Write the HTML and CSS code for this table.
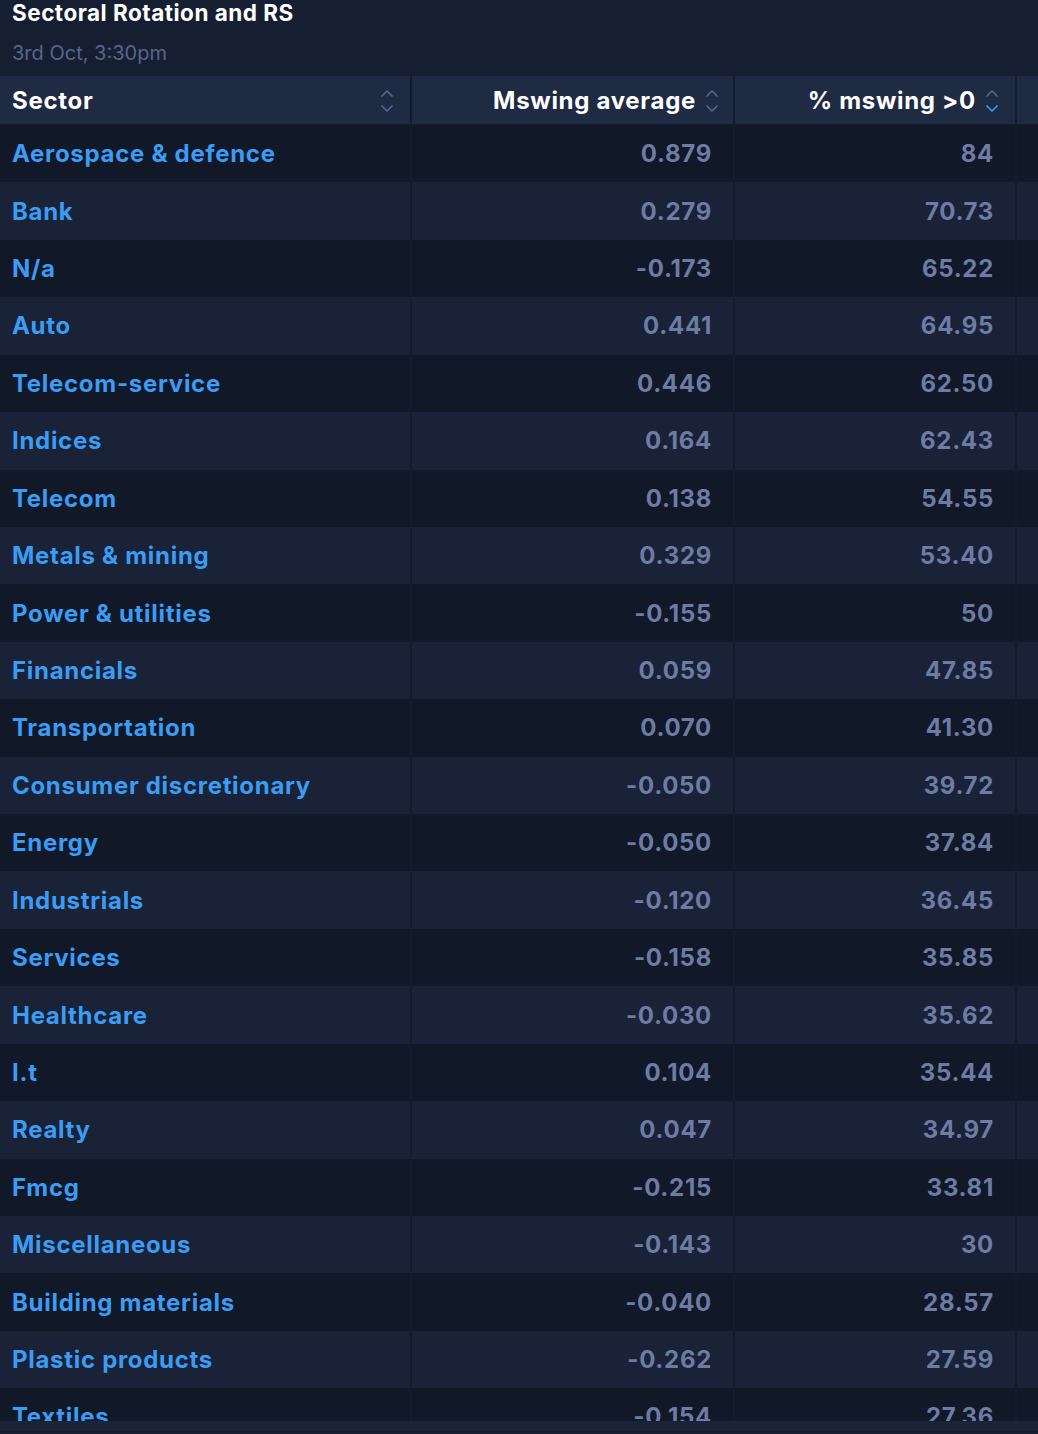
FILE: index.html
```html
<!DOCTYPE html>
<html>
<head>
<meta charset="utf-8">
<link rel="stylesheet" href="styles.css">
</head>
<body>
<div class="page">
  <div class="heading">
    <div class="title">Sectoral Rotation and RS</div>
    <div class="subtitle">3rd Oct, 3:30pm</div>
  </div>
  <div class="table">
    <div class="row head">
      <div class="cell c1"><span>Sector</span>
        <svg class="sort" viewBox="0 0 14 26"><path d="M2 8 L7 3 L12 8" class="up"/><path d="M2 18 L7 23 L12 18" class="down"/></svg>
      </div>
      <div class="cell c2"><span>Mswing average</span>
        <svg class="sort" viewBox="0 0 14 26"><path d="M2 8 L7 3 L12 8" class="up"/><path d="M2 18 L7 23 L12 18" class="down"/></svg>
      </div>
      <div class="cell c3"><span>% mswing &gt;0</span>
        <svg class="sort" viewBox="0 0 14 26"><path d="M2 8 L7 3 L12 8" class="up"/><path d="M2 18 L7 23 L12 18" class="down active"/></svg>
      </div>
      <div class="cell c4"></div>
    </div>
    <div class="row"><div class="cell c1"><a>Aerospace &amp; defence</a></div><div class="cell c2">0.879</div><div class="cell c3">84</div><div class="cell c4"></div></div>
    <div class="row"><div class="cell c1"><a>Bank</a></div><div class="cell c2">0.279</div><div class="cell c3">70.73</div><div class="cell c4"></div></div>
    <div class="row"><div class="cell c1"><a>N/a</a></div><div class="cell c2">-0.173</div><div class="cell c3">65.22</div><div class="cell c4"></div></div>
    <div class="row"><div class="cell c1"><a>Auto</a></div><div class="cell c2">0.441</div><div class="cell c3">64.95</div><div class="cell c4"></div></div>
    <div class="row"><div class="cell c1"><a>Telecom-service</a></div><div class="cell c2">0.446</div><div class="cell c3">62.50</div><div class="cell c4"></div></div>
    <div class="row"><div class="cell c1"><a>Indices</a></div><div class="cell c2">0.164</div><div class="cell c3">62.43</div><div class="cell c4"></div></div>
    <div class="row"><div class="cell c1"><a>Telecom</a></div><div class="cell c2">0.138</div><div class="cell c3">54.55</div><div class="cell c4"></div></div>
    <div class="row"><div class="cell c1"><a>Metals &amp; mining</a></div><div class="cell c2">0.329</div><div class="cell c3">53.40</div><div class="cell c4"></div></div>
    <div class="row"><div class="cell c1"><a>Power &amp; utilities</a></div><div class="cell c2">-0.155</div><div class="cell c3">50</div><div class="cell c4"></div></div>
    <div class="row"><div class="cell c1"><a>Financials</a></div><div class="cell c2">0.059</div><div class="cell c3">47.85</div><div class="cell c4"></div></div>
    <div class="row"><div class="cell c1"><a>Transportation</a></div><div class="cell c2">0.070</div><div class="cell c3">41.30</div><div class="cell c4"></div></div>
    <div class="row"><div class="cell c1"><a>Consumer discretionary</a></div><div class="cell c2">-0.050</div><div class="cell c3">39.72</div><div class="cell c4"></div></div>
    <div class="row"><div class="cell c1"><a>Energy</a></div><div class="cell c2">-0.050</div><div class="cell c3">37.84</div><div class="cell c4"></div></div>
    <div class="row"><div class="cell c1"><a>Industrials</a></div><div class="cell c2">-0.120</div><div class="cell c3">36.45</div><div class="cell c4"></div></div>
    <div class="row"><div class="cell c1"><a>Services</a></div><div class="cell c2">-0.158</div><div class="cell c3">35.85</div><div class="cell c4"></div></div>
    <div class="row"><div class="cell c1"><a>Healthcare</a></div><div class="cell c2">-0.030</div><div class="cell c3">35.62</div><div class="cell c4"></div></div>
    <div class="row"><div class="cell c1"><a>I.t</a></div><div class="cell c2">0.104</div><div class="cell c3">35.44</div><div class="cell c4"></div></div>
    <div class="row"><div class="cell c1"><a>Realty</a></div><div class="cell c2">0.047</div><div class="cell c3">34.97</div><div class="cell c4"></div></div>
    <div class="row"><div class="cell c1"><a>Fmcg</a></div><div class="cell c2">-0.215</div><div class="cell c3">33.81</div><div class="cell c4"></div></div>
    <div class="row"><div class="cell c1"><a>Miscellaneous</a></div><div class="cell c2">-0.143</div><div class="cell c3">30</div><div class="cell c4"></div></div>
    <div class="row"><div class="cell c1"><a>Building materials</a></div><div class="cell c2">-0.040</div><div class="cell c3">28.57</div><div class="cell c4"></div></div>
    <div class="row"><div class="cell c1"><a>Plastic products</a></div><div class="cell c2">-0.262</div><div class="cell c3">27.59</div><div class="cell c4"></div></div>
    <div class="row"><div class="cell c1"><a>Textiles</a></div><div class="cell c2">-0.154</div><div class="cell c3">27.36</div><div class="cell c4"></div></div>
  </div>
  <div class="footer"></div>
</div>
</body>
</html>
```
FILE: styles.css
```css
html, body {
  margin: 0;
  padding: 0;
  background: #161e31;
}
.page {
  width: 1038px;
  height: 1434px;
  overflow: hidden;
  font-family: Inter, "Liberation Sans", sans-serif;
  background: #161e31;
}
.heading {
  height: 76px;
  box-sizing: border-box;
  padding: 0 12px;
}
.title {
  color: #ffffff;
  font-size: 22.5px;
  font-weight: 700;
  line-height: 26px;
  letter-spacing: 0.5px;
}
.subtitle {
  margin-top: 15px;
  color: #56668c;
  font-size: 20px;
  font-weight: 400;
  line-height: 24px;
}
.table {
  height: 1345px;
  overflow: hidden;
}
.row {
  display: grid;
  grid-template-columns: 412px 323px 282px 1fr;
  height: 57.43px;
  background: #1a2237;
}
.row:nth-child(even) {
  background: #111828;
}
.row.head {
  height: 49px;
  background: #1f2a43;
  box-shadow: inset 0 -1px 0 #151c2e;
}
.cell {
  display: flex;
  align-items: center;
  box-sizing: border-box;
  border-right: 2px solid #141b2d;
  font-size: 24px;
  font-weight: 700;
  letter-spacing: 0.7px;
  color: #6c7ca4;
  min-width: 0;
}
.cell.c4 {
  border-right: none;
}
.c1 {
  padding-left: 12px;
  justify-content: space-between;
  padding-right: 16px;
}
.c2, .c3 {
  justify-content: flex-end;
  padding-right: 21px;
}
.head .cell {
  color: #ffffff;
  border-right-color: #141b2d;
}
.head .c1 {
  padding-right: 16px;
}
.head .c2 {
  padding-right: 14px;
}
.head .c3 {
  padding-right: 16px;
}
.c1 a {
  color: #3b9cf3;
  text-decoration: none;
  white-space: nowrap;
}
.sort {
  width: 14px;
  height: 26px;
  margin-left: 9px;
  flex: none;
}
.sort path {
  fill: none;
  stroke: #56668c;
  stroke-width: 1.7;
  stroke-linecap: round;
  stroke-linejoin: round;
}
.sort path.active {
  stroke: #3b9cf3;
}
.footer {
  height: 10px;
  background: #1b2339;
}
```
